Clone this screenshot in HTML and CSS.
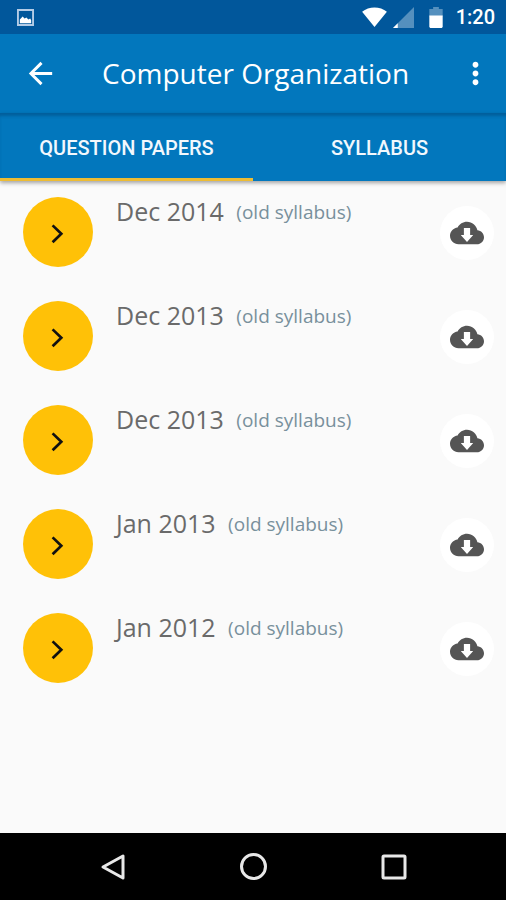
FILE: index.html
```html
<!DOCTYPE html>
<html lang="en">
	<head>
		<meta charset="UTF-8" />
		<meta name="viewport" content="width=device-width, initial-scale=1.0" />
		<title>Computer Organization</title>
		<link rel="stylesheet" href="styles.css">
	</head>
	<body>
		<!-- Shared icons -->
		<svg class="sprite" aria-hidden="true">
			<symbol id="chevron" viewBox="0 0 24 24">
				<path fill="none" stroke="#111" stroke-width="1.8" d="M8.4 7.6 14.2 13.2 8.4 18.8" />
			</symbol>
			<symbol id="cloud" viewBox="0 0 24 24">
				<path d="M19.35 10.04C18.67 6.59 15.64 4 12 4 9.11 4 6.6 5.64 5.35 8.04 2.34 8.36 0 10.91 0 14c0 3.31 2.69 6 6 6h13c2.76 0 5-2.24 5-5 0-2.64-2.05-4.78-4.65-4.96zM16.4 13.4 12 18.3l-4.4-4.9h2.2V8.5h4.4v4.9z" />
			</symbol>
		</svg>

		<div class="status-bar">
			<svg class="picture-icon" viewBox="0 0 18 18">
				<path fill="none" stroke="#b4cce6" stroke-width="2" d="M1 1h16v16H1z" />
				<path fill="#fff" d="M3 15v-4l3-3 2 2 2-1 2 2 2-1 1 2v3z" />
			</svg>
			<div class="status-right">
				<svg class="wifi-icon" viewBox="0 0 26 21">
					<path fill="#fff" d="M0 5C7-1 19-1 26 5L13 21z" />
				</svg>
				<svg class="signal-icon" viewBox="0 0 22 22">
					<path fill="#5590be" d="M22 0v22H0z" />
					<path fill="#fff" d="M5 17v5H0z" />
				</svg>
				<svg class="battery-icon" viewBox="0 0 14 22">
					<path fill="#5590be" d="M4 0h6v2h4v8H0V2h4z" />
					<path fill="#fff" d="M0 9h14v12l-1 1H1l-1-1z" />
				</svg>
				<span class="clock">1:20</span>
			</div>
		</div>

		<header class="toolbar">
			<button class="icon-button" aria-label="Back">
				<svg viewBox="0 0 24 24">
					<path d="M20 11H7.83l5.59-5.59L12 4l-8 8 8 8 1.41-1.41L7.83 13H20v-2z" />
				</svg>
			</button>
			<h1>Computer Organization</h1>
			<button class="icon-button" aria-label="More options">
				<svg viewBox="0 0 24 24">
					<path d="M12 8c1.1 0 2-.9 2-2s-.9-2-2-2-2 .9-2 2 .9 2 2 2zm0 2c-1.1 0-2 .9-2 2s.9 2 2 2 2-.9 2-2-.9-2-2-2zm0 6c-1.1 0-2 .9-2 2s.9 2 2 2 2-.9 2-2-.9-2-2-2z" />
				</svg>
			</button>
		</header>

		<nav class="tabs">
			<button class="tab active">QUESTION PAPERS</button>
			<button class="tab">SYLLABUS</button>
		</nav>

		<main>
			<ul class="papers">
				<li class="paper">
					<button class="open" aria-label="Open Dec 2014"><svg><use href="#chevron" /></svg></button>
					<p class="name">Dec 2014 <span class="note">(old syllabus)</span></p>
					<button class="download" aria-label="Download Dec 2014"><svg><use href="#cloud" /></svg></button>
				</li>
				<li class="paper">
					<button class="open" aria-label="Open Dec 2013"><svg><use href="#chevron" /></svg></button>
					<p class="name">Dec 2013 <span class="note">(old syllabus)</span></p>
					<button class="download" aria-label="Download Dec 2013"><svg><use href="#cloud" /></svg></button>
				</li>
				<li class="paper">
					<button class="open" aria-label="Open Dec 2013"><svg><use href="#chevron" /></svg></button>
					<p class="name">Dec 2013 <span class="note">(old syllabus)</span></p>
					<button class="download" aria-label="Download Dec 2013"><svg><use href="#cloud" /></svg></button>
				</li>
				<li class="paper">
					<button class="open" aria-label="Open Jan 2013"><svg><use href="#chevron" /></svg></button>
					<p class="name">Jan 2013 <span class="note">(old syllabus)</span></p>
					<button class="download" aria-label="Download Jan 2013"><svg><use href="#cloud" /></svg></button>
				</li>
				<li class="paper">
					<button class="open" aria-label="Open Jan 2012"><svg><use href="#chevron" /></svg></button>
					<p class="name">Jan 2012 <span class="note">(old syllabus)</span></p>
					<button class="download" aria-label="Download Jan 2012"><svg><use href="#cloud" /></svg></button>
				</li>
			</ul>
		</main>

		<footer class="nav-bar">
			<button aria-label="Back">
				<svg viewBox="0 0 28 28"><path d="M24 3v22L4 14z" /></svg>
			</button>
			<button aria-label="Home">
				<svg viewBox="0 0 28 28"><circle cx="14.5" cy="13.5" r="12" /></svg>
			</button>
			<button aria-label="Recent apps">
				<svg viewBox="0 0 28 28"><rect x="4" y="3" width="22" height="22" rx="1" /></svg>
			</button>
		</footer>
	</body>
</html>
```

FILE: styles.css
```css
* {
	box-sizing: border-box;
}

body {
	margin: 0;
	min-height: 100vh;
	display: flex;
	flex-direction: column;
	background-color: #fafafa;
	font-family: "Open Sans", "Noto Sans", sans-serif;
}

button {
	display: flex;
	align-items: center;
	justify-content: center;
	padding: 0;
	border: none;
	background: none;
	color: inherit;
	cursor: pointer;
}

.sprite {
	display: none;
}

/* Status bar */
.status-bar {
	display: flex;
	align-items: center;
	justify-content: space-between;
	height: 34px;
	padding: 0 11px 0 17px;
	background-color: #01579b;
	color: #fff;
}

.status-right {
	display: flex;
	align-items: center;
}

.picture-icon {
	width: 17px;
	height: 17px;
}

.wifi-icon {
	width: 25px;
	height: 20px;
	margin-right: 6px;
}

.signal-icon {
	width: 21px;
	height: 21px;
	margin-right: 15px;
}

.battery-icon {
	width: 14px;
	height: 21px;
	margin-right: 13px;
}

.clock {
	font: 500 20px/36px Roboto, sans-serif;
}

/* Toolbar */
.toolbar {
	display: flex;
	align-items: center;
	height: 79px;
	padding: 0 8px 0 17px;
	background-color: #0277bd;
	color: #fff;
}

.toolbar h1 {
	flex: 1;
	margin: 0;
	padding: 0 0 2px 39px;
	font-size: 28px;
	font-weight: 400;
	line-height: 38px;
}

.icon-button {
	width: 46px;
	height: 46px;
}

.icon-button svg {
	width: 35px;
	height: 35px;
	fill: currentColor;
}

/* Tabs */
.tabs {
	display: grid;
	grid-template-columns: 1fr 1fr;
	height: 68px;
	background-color: #0277bd;
	box-shadow: inset 0 4px 3px -1px rgba(0, 40, 80, 0.3), 0 2px 4px rgba(0, 0, 0, 0.35);
}

.tab {
	border-top: 4px solid transparent;
	border-bottom: 3px solid transparent;
	color: #f2f8fd;
	font: 500 20px/24px Roboto, sans-serif;
}

.tab.active {
	border-bottom-color: #edbc34;
}

/* Paper list */
main {
	flex: 1;
}

.papers {
	margin: 0;
	padding: 16px 12px 16px 23px;
	list-style: none;
}

.paper {
	display: flex;
	height: 104px;
}

.open {
	width: 70px;
	height: 70px;
	border-radius: 50%;
	background-color: #ffc107;
}

.open svg {
	width: 36px;
	height: 36px;
}

.name {
	flex: 1;
	margin: 0;
	padding-left: 23px;
	color: #6a6a6a;
	font-size: 25px;
	line-height: 28px;
}

.note {
	margin-left: 6px;
	color: #78909c;
	font-size: 19px;
	vertical-align: 2px;
}

.download {
	width: 54px;
	height: 54px;
	margin-top: 9px;
	border-radius: 50%;
	background-color: #fff;
}

.download svg {
	width: 34px;
	height: 34px;
	fill: #555;
}

/* Navigation bar */
.nav-bar {
	display: grid;
	grid-template-columns: repeat(3, 1fr);
	height: 67px;
	padding: 0 43px;
	background-color: #000;
}

.nav-bar svg {
	width: 28px;
	height: 28px;
	fill: none;
	stroke: #e8e8e8;
	stroke-width: 3;
	stroke-linejoin: round;
}
```
